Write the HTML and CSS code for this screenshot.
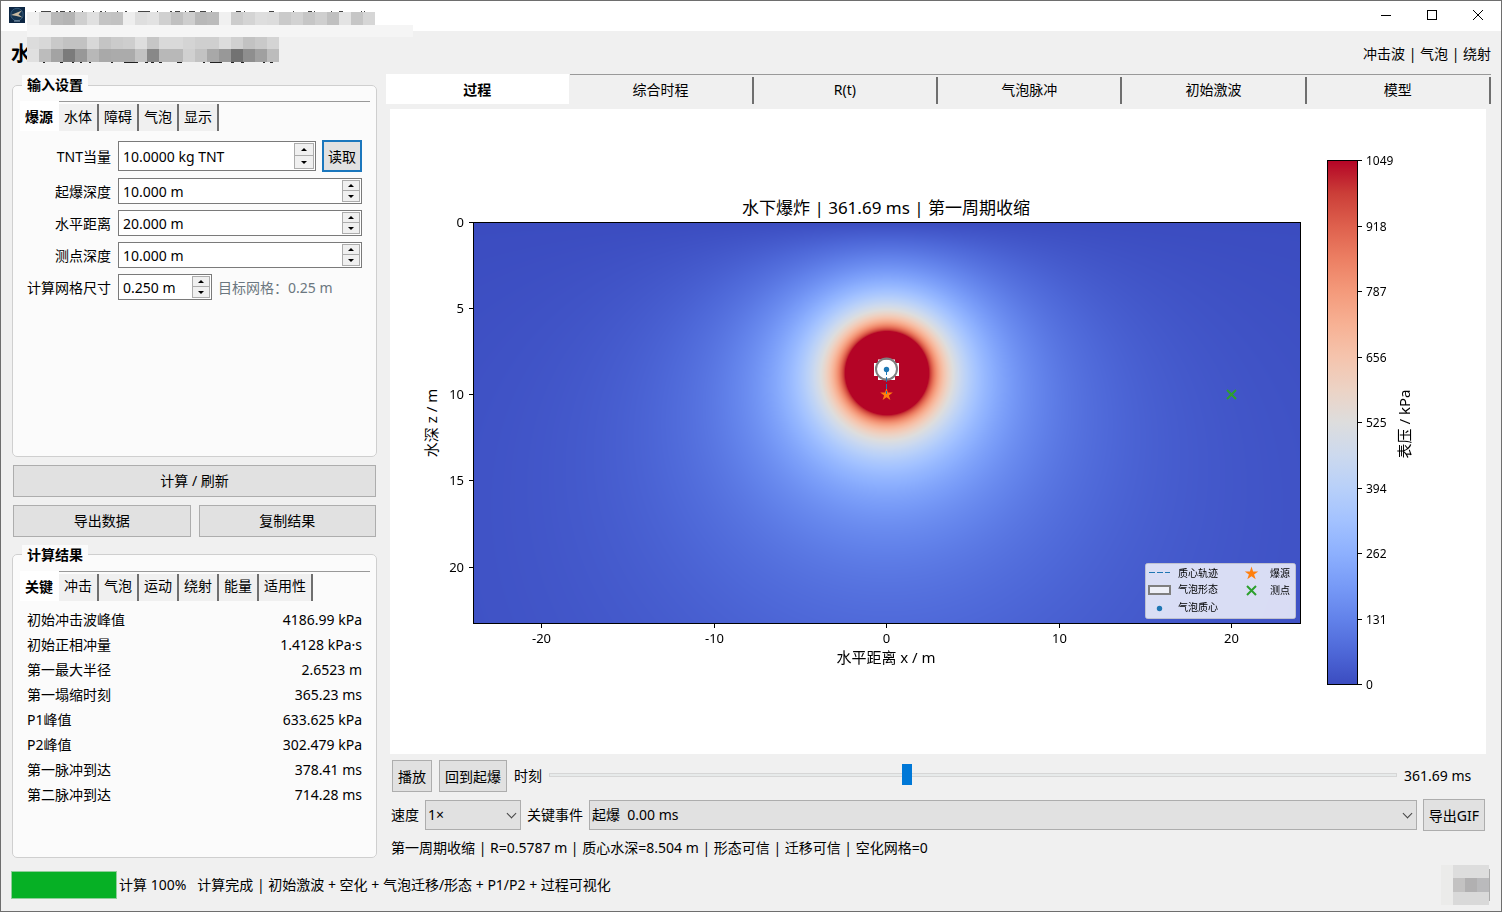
FILE: index.html
```html
<!DOCTYPE html>
<html lang="zh-CN">
<head>
<meta charset="utf-8">
<title>水下爆炸</title>
<link rel="stylesheet" href="styles.css">
</head>
<body>
<div class="window">
  <header class="titlebar">
    <svg class="app-icon" width="16" height="16" viewBox="0 0 16 16" aria-hidden="true">
      <rect width="16" height="16" fill="#0d2744"/>
      <circle cx="8" cy="7.5" r="6.2" fill="#16344f" stroke="#34597a" stroke-width="1"/>
      <path d="M2 8 L13 3.5 L9.5 7.5 L13.5 10.5 L7.5 9Z" fill="#c9b9a0"/>
      <path d="M5 14 H11" stroke="#8fa4b5" stroke-width="1"/>
    </svg>
    <div class="window-buttons">
      <button type="button" aria-label="最小化"><svg width="12" height="12" viewBox="0 0 12 12"><path d="M1 5.500H11"/></svg></button>
      <button type="button" aria-label="最大化"><svg width="12" height="12" viewBox="0 0 12 12"><rect x="1.500" y="0.500" width="9" height="9"/></svg></button>
      <button type="button" aria-label="关闭"><svg width="12" height="12" viewBox="0 0 12 12"><path d="M1 0L11 10M11 0L1 10"/></svg></button>
    </div>
  </header>
  <svg class="mosaic" id="title-mosaic" width="387" height="56" viewBox="0 0 387 56" aria-hidden="true"></svg>

  <div class="heading">
    <h1>水</h1>
    <span>冲击波 | 气泡 | 绕射</span>
  </div>

  <main class="body">
    <section class="side">
      <fieldset class="group group-input">
        <legend>输入设置</legend>
        <div class="tabs" role="tablist">
          <button type="button" role="tab" aria-selected="true">爆源</button>
          <button type="button" role="tab">水体</button>
          <button type="button" role="tab">障碍</button>
          <button type="button" role="tab">气泡</button>
          <button type="button" role="tab">显示</button>
        </div>
        <div class="form">
          <label for="tnt">TNT当量</label>
          <div class="field">
            <div class="spin spin-tall"><input id="tnt" type="text" value="10.0000 kg TNT"><span class="arrows"><button type="button" class="up" aria-label="增加"></button><button type="button" class="down" aria-label="减少"></button></span></div>
            <button type="button" class="btn btn-focus">读取</button>
          </div>
          <label for="depth">起爆深度</label>
          <div class="spin"><input id="depth" type="text" value="10.000 m"><span class="arrows"><button type="button" class="up" aria-label="增加"></button><button type="button" class="down" aria-label="减少"></button></span></div>
          <label for="range">水平距离</label>
          <div class="spin"><input id="range" type="text" value="20.000 m"><span class="arrows"><button type="button" class="up" aria-label="增加"></button><button type="button" class="down" aria-label="减少"></button></span></div>
          <label for="probe">测点深度</label>
          <div class="spin"><input id="probe" type="text" value="10.000 m"><span class="arrows"><button type="button" class="up" aria-label="增加"></button><button type="button" class="down" aria-label="减少"></button></span></div>
          <label for="grid">计算网格尺寸</label>
          <div class="field">
            <div class="spin spin-short"><input id="grid" type="text" value="0.250 m"><span class="arrows"><button type="button" class="up" aria-label="增加"></button><button type="button" class="down" aria-label="减少"></button></span></div>
            <span class="hint">目标网格：0.25 m</span>
          </div>
        </div>
      </fieldset>

      <button type="button" class="btn">计算 / 刷新</button>
      <div class="pair">
        <button type="button" class="btn">导出数据</button>
        <button type="button" class="btn">复制结果</button>
      </div>

      <fieldset class="group group-result">
        <legend>计算结果</legend>
        <div class="tabs" role="tablist">
          <button type="button" role="tab" aria-selected="true">关键</button>
          <button type="button" role="tab">冲击</button>
          <button type="button" role="tab">气泡</button>
          <button type="button" role="tab">运动</button>
          <button type="button" role="tab">绕射</button>
          <button type="button" role="tab">能量</button>
          <button type="button" role="tab">适用性</button>
        </div>
        <table class="results">
          <tr><th scope="row">初始冲击波峰值</th><td>4186.99 kPa</td></tr>
          <tr><th scope="row">初始正相冲量</th><td>1.4128 kPa·s</td></tr>
          <tr><th scope="row">第一最大半径</th><td>2.6523 m</td></tr>
          <tr><th scope="row">第一塌缩时刻</th><td>365.23 ms</td></tr>
          <tr><th scope="row">P1峰值</th><td>633.625 kPa</td></tr>
          <tr><th scope="row">P2峰值</th><td>302.479 kPa</td></tr>
          <tr><th scope="row">第一脉冲到达</th><td>378.41 ms</td></tr>
          <tr><th scope="row">第二脉冲到达</th><td>714.28 ms</td></tr>
        </table>
      </fieldset>
    </section>

    <section class="view">
      <div class="tabs tabs-wide" role="tablist">
        <button type="button" role="tab" aria-selected="true">过程</button>
        <button type="button" role="tab">综合时程</button>
        <button type="button" role="tab">R(t)</button>
        <button type="button" role="tab">气泡脉冲</button>
        <button type="button" role="tab">初始激波</button>
        <button type="button" role="tab">模型</button>
      </div>
      <div class="stage">
        <svg class="plot" viewBox="390 109 1096 643">
          <defs><linearGradient id="coolwarm" x1="0" y1="1" x2="0" y2="0"></linearGradient></defs>
          <text class="t-title" x="886" y="214">水下爆炸 | 361.69 ms | 第一周期收缩</text>
          <foreignObject x="473" y="222" width="828" height="402"><canvas id="field" class="field-map" width="828" height="402"></canvas></foreignObject>
          <g id="bubble">
            <path d="M878 359.500H895V363H899V376H895V380H878V376H874V363H878Z" fill="#fff"/>
            <circle cx="886.500" cy="369" r="10.500" fill="none" stroke="#7f7f7f" stroke-width="2"/>
            <circle cx="886.500" cy="369.500" r="2.700" fill="#1f77b4"/>
            <path class="star" d="M886.500 388l1.500 4.600h4.800l-3.900 2.800 1.500 4.600-3.900-2.800-3.900 2.800 1.500-4.600-3.900-2.800h4.800z"/>
            <path d="M886.500 370V394" stroke="#1f77b4" stroke-width="1" stroke-dasharray="5 2"/>
            <path class="cross" d="M1227 390l9 9m0-9l-9 9"/>
          </g>
          <rect class="frame" x="473.500" y="222.500" width="827" height="401"/>
          <g id="axes"></g>
          <text class="t-label" x="886" y="663">水平距离 x / m</text>
          <text class="t-label" transform="translate(437 423) rotate(-90)">水深 z / m</text>
          <rect x="1327.500" y="160.500" width="30" height="524" fill="url(#coolwarm)" stroke="#000"/>
          <text class="t-label" transform="translate(1410 424) rotate(-90)">表压 / kPa</text>
          <rect x="1145.500" y="563.500" width="150" height="55" rx="2" fill="#fff" fill-opacity=".8" stroke="#ccc" stroke-opacity=".8"/>
          <path d="M1149 572.500H1170" stroke="#1f77b4" stroke-dasharray="6 2"/>
          <rect x="1149" y="586" width="21" height="8" fill="#eef0f8" stroke="#7f7f7f" stroke-width="2"/>
          <circle cx="1159.500" cy="608.500" r="2.700" fill="#1f77b4"/>
          <path class="star" d="M1251.500 566.500l1.600 4.900h5.100l-4.100 3 1.600 4.900-4.200-3-4.200 3 1.600-4.900-4.100-3h5.100z"/>
          <path class="cross" d="M1247 586l9 9m0-9l-9 9"/>
          <g class="t-legend">
            <text x="1178" y="577">质心轨迹</text>
            <text x="1178" y="593">气泡形态</text>
            <text x="1178" y="611">气泡质心</text>
            <text x="1270" y="577">爆源</text>
            <text x="1270" y="594">测点</text>
          </g>
        </svg>
      </div>
      <div class="controls">
        <div class="row row-play">
          <button type="button" class="btn">播放</button>
          <button type="button" class="btn">回到起爆</button>
          <label for="time">时刻</label>
          <input id="time" class="slider" type="range" min="0" max="860" step="0.01" value="361.69">
          <output for="time">361.69 ms</output>
        </div>
        <div class="row row-event">
          <label for="speed">速度</label>
          <span class="select select-speed"><select id="speed"><option>1×</option></select></span>
          <label for="event">关键事件</label>
          <span class="select select-event"><select id="event"><option>起爆&nbsp; 0.00 ms</option></select></span>
          <button type="button" class="btn">导出GIF</button>
        </div>
        <p class="state">第一周期收缩 | R=0.5787 m | 质心水深=8.504 m | 形态可信 | 迁移可信 | 空化网格=0</p>
      </div>
    </section>
  </main>

  <footer class="status">
    <progress id="progress" value="100" max="100"></progress>
    <label for="progress">计算 100%</label>
    <span class="message">计算完成 | 初始激波 + 空化 + 气泡迁移/形态 + P1/P2 + 过程可视化</span>
    <svg class="stamp" width="50" height="40" viewBox="0 0 50 40" aria-hidden="true">
      <rect width="12" height="40" fill="#ebebea"/>
      <rect x="12" width="36" height="13" fill="#dddddd"/>
      <rect x="12" y="13" width="12" height="14" fill="#c3c2c2"/>
      <rect x="24" y="13" width="12" height="14" fill="#b1b0b1"/>
      <rect x="36" y="13" width="12" height="14" fill="#bababc"/>
      <rect x="12" y="27" width="36" height="13" fill="#d9d9d9"/>
      <rect x="48" y="4" width="1" height="32" fill="#aaa"/>
    </svg>
  </footer>
</div>
<script src="plot.js"></script>
</body>
</html>
```
FILE: styles.css
```css
* { box-sizing: border-box; }

body {
  margin: 0;
  background: #f0f0f0;
  color: #000;
  font: 14px/20px "Noto Sans", "Noto Sans CJK SC", sans-serif;
}

button, input, select { font: inherit; color: inherit; margin: 0; }
button { padding: 0; border: 0; background: none; }

.window {
  position: relative;
  display: flex;
  flex-direction: column;
  min-height: 100vh;
  border: 1px solid #6e6e6e;
}

.titlebar {
  display: flex;
  align-items: center;
  justify-content: space-between;
  height: 30px;
  padding-left: 8px;
  background: #fff;
}
.app-icon { margin-bottom: 2px; }
.window-buttons { display: flex; }
.window-buttons button { width: 46px; height: 30px; }
.window-buttons svg { display: block; margin: 0 auto; fill: none; stroke: #000; stroke-width: 1; }

.mosaic { position: absolute; left: 26px; top: 8px; }

.heading {
  display: flex;
  align-items: center;
  justify-content: space-between;
  height: 44px;
  padding: 2px 10px 0 10px;
}
.heading h1 { margin: 0; font-size: 20px; line-height: 28px; }

.body { display: flex; flex: 1; }

.side {
  display: flex;
  flex-direction: column;
  gap: 8px;
  width: 365px;
  margin-left: 11px;
}
.pair { display: grid; grid-template-columns: 1fr 1fr; gap: 8px; }
.side > .btn, .pair { margin: 0 1px; }

.btn {
  height: 32px;
  padding: 1px 5px 0;
  border: 1px solid #adadad;
  background: #e1e1e1;
  white-space: nowrap;
}
.btn-focus { width: 40px; padding: 1px 0 0; border: 2px solid #1b77bd; }

.group {
  min-width: 0;
  margin: 0;
  padding: 6px 6px 0 7px;
  border: 1px solid #cfcfcf;
  border-radius: 5px;
  background: #fbfbfb;
}
.group-input { flex: 383 1 0; }
.group-result { flex: 313 1 0; }
.group legend {
  height: 20px;
  margin-left: 2px;
  padding: 0 5px;
  background: #fbfbfb;
  font-weight: bold;
}

.tabs { display: flex; height: 30px; position: relative; }
.tabs button {
  padding: 0 5px 2px 5px;
  border-right: 2px solid #6f6f6f;
  background: #f0f0f0;
  margin-top: 3px;
  white-space: nowrap;
}
.tabs button[aria-selected="true"] {
  width: 39px;
  margin-top: 0;
  padding: 2px 6px 0 5px;
  border-right: 0;
  background: #fff;
  font-weight: bold;
}
.tabs::before {
  content: "";
  position: absolute;
  left: 39px;
  right: 0;
  top: 0;
  height: 1px;
  background: #999;
}

.tabs-wide button { flex: 1 1 0; }
.tabs-wide button[aria-selected="true"] { width: auto; }
.tabs-wide::before { left: 16.66%; }

.form {
  display: grid;
  grid-template-columns: 84px 1fr;
  gap: 6px 7px;
  align-items: center;
  padding: 9px 8px 0 7px;
}
.form > label { padding-top: 1px; text-align: right; white-space: nowrap; }
.field { display: flex; align-items: center; gap: 6px; }

.spin {
  display: flex;
  flex: 1;
  height: 26px;
  padding: 1px;
  border: 1px solid #7a7a7a;
  background: #fff;
}
.spin-tall { height: 30px; }
.spin-short { flex: 0 0 94px; }
.spin input {
  flex: 1;
  width: 0;
  padding: 2px 0 0 3px;
  border: 0;
  background: none;
  outline: 0;
}
.arrows { display: grid; width: 18px; grid-template-rows: 1fr 1fr; }
.spin-tall .arrows { width: 20px; }
.arrows button {
  display: grid;
  place-items: center;
  border: 1px solid #acacac;
  background: #f0f0f0;
}
.arrows .down { border-top: 0; }
.arrows button::before {
  content: "";
  border: 3px solid transparent;
}
.arrows .up::before { border-top-width: 0; border-bottom-color: #000; }
.arrows .down::before { border-bottom-width: 0; border-top-color: #000; }
.hint { padding-top: 1px; color: #6b7780; white-space: nowrap; }

.results { width: 100%; margin-top: 6px; border-collapse: collapse; }
.results th, .results td { height: 25px; padding: 1px 8px 0 7px; }
.results th { text-align: left; font-weight: normal; }
.results td { text-align: right; }

.view {
  display: flex;
  flex: 1;
  flex-direction: column;
  min-width: 0;
  margin: -1px 10px 0 9px;
}
.stage { flex: 1; margin: 5px 5px 0 4px; background: #fff; }
.plot { display: block; width: 100%; }
.field-map { display: block; }
.frame { fill: none; stroke: #000; }
.star { fill: #ff7f0e; }
.cross { fill: none; stroke: #2ca02c; stroke-width: 2; }
.tick { stroke: #000; }
.plot text { fill: #000; }
.t-title { font-size: 17px; text-anchor: middle; }
.t-label { font-size: 15px; text-anchor: middle; }
.t-tick { font-size: 13px; }
.t-bar { font-size: 12px; }
.t-x { text-anchor: middle; }
.t-y { text-anchor: end; }
.t-legend { font-size: 10px; }

.controls { padding: 6px 6px 0 5px; }
.row { display: flex; align-items: center; gap: 7px; }
.row-play { height: 32px; padding-left: 1px; }
.row-play output { width: 81px; }
.row-event { height: 32px; margin-top: 7px; gap: 6px; }
.row label { white-space: nowrap; }

.slider {
  flex: 1;
  min-width: 0;
  height: 22px;
  margin-bottom: 2px;
  appearance: none;
  background: none;
}
.slider::-webkit-slider-runnable-track {
  height: 4px;
  border: 1px solid #d6d6d6;
  background: #e7eaea;
}
.slider::-webkit-slider-thumb {
  appearance: none;
  width: 10px;
  height: 21px;
  margin-top: -10px;
  background: #0078d7;
}

.select { position: relative; display: block; }
.select select {
  width: 100%;
  height: 30px;
  padding: 0 24px 0 2px;
  border: 1px solid #adadad;
  border-radius: 0;
  background: #e1e1e1;
  appearance: none;
}
.select::after {
  content: "";
  position: absolute;
  right: 6px;
  top: 10px;
  width: 6px;
  height: 6px;
  border: solid #444;
  border-width: 0 1px 1px 0;
  transform: rotate(45deg);
  pointer-events: none;
}
.select-speed { width: 96px; }
.select-event { flex: 1; }
.state { margin: 7px 0 0; }

.status {
  display: flex;
  align-items: center;
  height: 53px;
  padding: 0 10px;
}
.status progress {
  width: 106px;
  height: 28px;
  margin-right: 2px;
  border: 1px solid #8fce9a;
  appearance: none;
}
.status progress::-webkit-progress-bar { background: #e6e6e6; }
.status progress::-webkit-progress-value { background: #06b025; }
.message { flex: 1; margin-left: 11px; }
```
FILE: plot.js
```js
const SVG = "http://www.w3.org/2000/svg";
const RAMP = [
  [59, 76, 192], [78, 104, 216], [98, 130, 234], [119, 154, 247], [141, 176, 254],
  [163, 194, 255], [184, 208, 249], [204, 217, 238], [221, 221, 221], [236, 211, 197],
  [245, 196, 173], [247, 177, 148], [244, 154, 123], [236, 127, 99], [222, 96, 77],
  [203, 62, 56], [180, 4, 38]
];

function add(parent, name, attrs, text) {
  const node = document.createElementNS(SVG, name);
  for (const key in attrs) node.setAttribute(key, attrs[key]);
  if (text !== undefined) node.textContent = text;
  parent.appendChild(node);
}

function colour(value) {
  const t = Math.max(0, Math.min(1, value)) * (RAMP.length - 1);
  const i = Math.min(RAMP.length - 2, Math.floor(t));
  return RAMP[i].map((c, k) => c + (RAMP[i + 1][k] - c) * (t - i));
}

/* Gauge pressure of a source at depth 8.7 m with its mirror image above the surface. */
function pressure(x, z) {
  const r = Math.max(0.5, Math.hypot(x, z - 8.7));
  const image = Math.hypot(x, z + 8.7);
  return 2700 * (1 / r - 1 / image) * Math.exp(-r / 40) + 4900 / r ** 4;
}

const canvas = document.getElementById("field");
const ctx = canvas.getContext("2d");
const pixels = ctx.createImageData(canvas.width, canvas.height);
const scale = 17.25;
for (let j = 0, p = 0; j < canvas.height; j++) {
  for (let i = 0; i < canvas.width; i++, p += 4) {
    const c = colour(pressure((i - 413.5) / scale, j / scale) / 1049);
    pixels.data[p] = c[0];
    pixels.data[p + 1] = c[1];
    pixels.data[p + 2] = c[2];
    pixels.data[p + 3] = 255;
  }
}
ctx.putImageData(pixels, 0, 0);

const ramp = document.getElementById("coolwarm");
RAMP.forEach((c, i) => add(ramp, "stop", { offset: i / (RAMP.length - 1), "stop-color": `rgb(${c})` }));

const axes = document.getElementById("axes");
[-20, -10, 0, 10, 20].forEach(v => {
  const x = Math.round(886 + v * scale) + 0.5;
  add(axes, "path", { class: "tick", d: `M${x} 624v4` });
  add(axes, "text", { class: "t-tick t-x", x: x, y: 643 }, v);
});
[0, 5, 10, 15, 20].forEach(v => {
  const y = Math.floor(222 + v * scale) + 0.5;
  add(axes, "path", { class: "tick", d: `M469 ${y}h4` });
  add(axes, "text", { class: "t-tick t-y", x: 464, y: y + 4.5 }, v);
});
[0, 131, 262, 394, 525, 656, 787, 918, 1049].forEach((v, i) => {
  const y = Math.round(684 - i * 65.5) + 0.5;
  add(axes, "path", { class: "tick", d: `M1358 ${y}h4` });
  add(axes, "text", { class: "t-bar", x: 1366, y: y + 4.5 }, v);
});

const mosaic = document.getElementById("title-mosaic");
const top1 = "f0 de b8 b4 cf e0 c4 c2 ee de e2 d0 c0 ce b8 bb f0 cc d4 de dc ca d2 c6 cf c0 e3 c6 d6";
const row1 = "dc d8 c9 c2 c2 d8 c4 cb ce de c6 d9 d9 d4 cf cf dc d0 c2 c9 d4";
const row2 = "e0 bc a3 7b 98 b8 a9 ab ab c2 88 b8 b8 d0 c2 a8 98 72 8e a0 bc";
function cells(list, y, width, height) {
  list.split(" ").forEach((g, i) => add(mosaic, "rect", { x: i * width, y: y, width: width, height: height, fill: `#${g}${g}${g}` }));
}
cells(top1, 3, 12, 13);
add(mosaic, "rect", { x: 0, y: 16, width: 386, height: 12, fill: "#f5f5f5" });
cells(row1, 28, 12, 12);
cells(row2, 40, 12, 13);
/* Stroke ends that stay visible along the edges of the covered strips. */
add(mosaic, "path", { d: "M8 2.500h1M14 2.500h10M29 2.500h2M33 2.500h5M42 2.500h2M47 2.500h1M55 2.500h1M66 2.500h1M73 2.500h2M78 2.500h1M90 2.500h1M98 2.500h2M111 2.500h12M130 2.500h1M143 2.500h2M148 2.500h5M158 2.500h1M162 2.500h6M173 2.500h6M184 2.500h1M209 2.500h5M217 2.500h1M242 2.500h5M266 2.500h1M281 2.500h4M287 2.500h1M304 2.500h1M312 2.500h4M334 2.500h1M337 2.500h1", stroke: "#444", fill: "none" });
add(mosaic, "path", { d: "M16 53.500h2M33 53.500h3M45 53.500h2M53 53.500h2M62 53.500h2M84 53.500h2M97 53.500h14M118 53.500h3M124 53.500h3M132 53.500h3M150 53.500h5M176 53.500h2M183 53.500h12M204 53.500h3M214 53.500h3M236 53.500h2M243 53.500h3", stroke: "#222", "stroke-width": 1, fill: "none" });
```
